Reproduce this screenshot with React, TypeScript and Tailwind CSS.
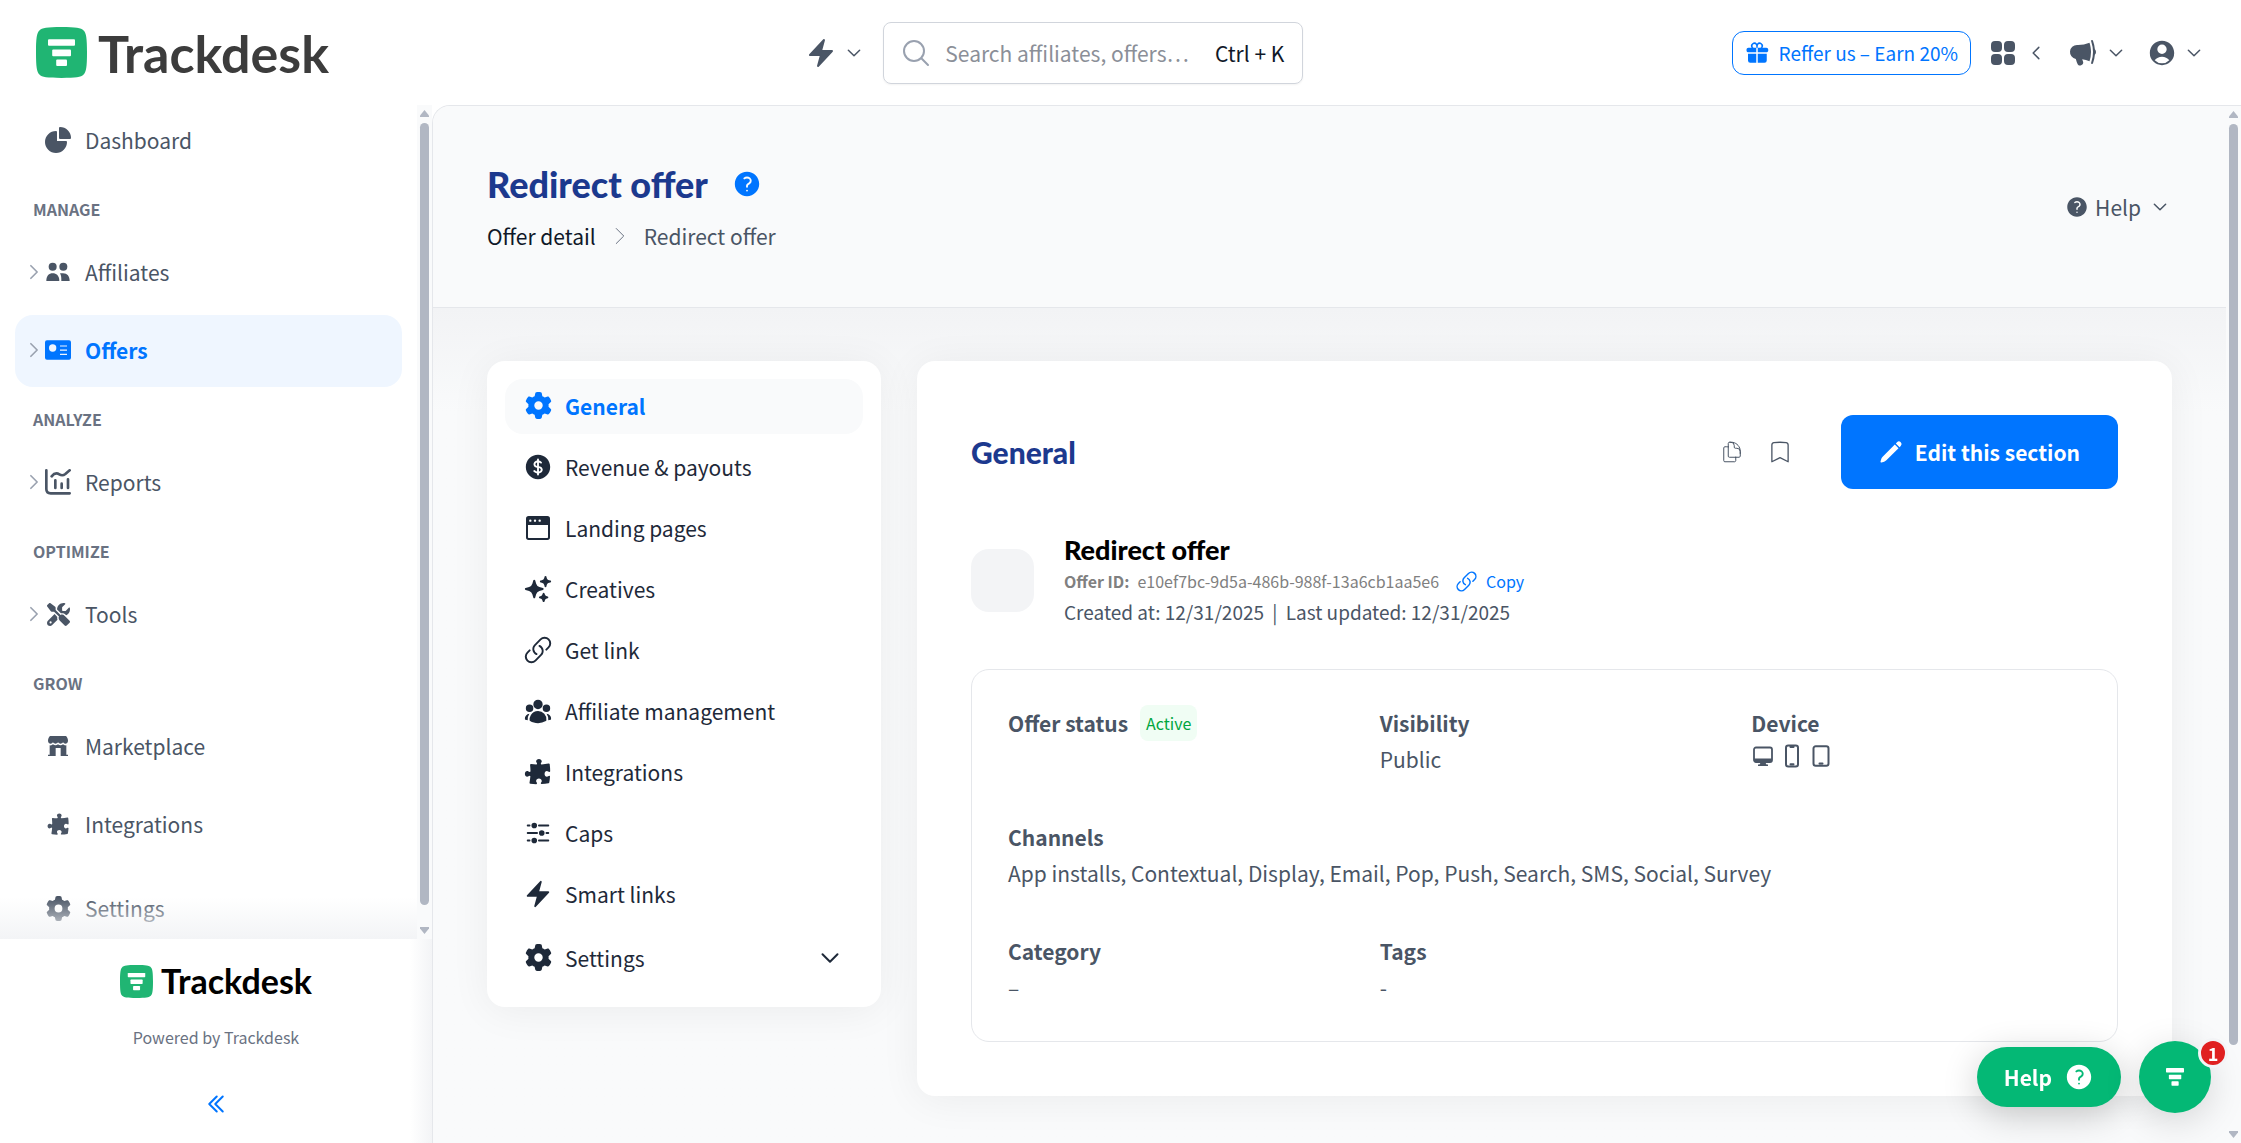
import type { ReactNode } from "react";
import { FaGear, FaScrewdriverWrench } from "react-icons/fa6";
import {
  HiAdjustmentsHorizontal,
  HiBolt,
  HiChartPie,
  HiCurrencyDollar,
  HiGift,
  HiLink,
  HiMegaphone,
  HiOutlineBookmark,
  HiOutlineChevronDoubleLeft,
  HiOutlineChevronDown,
  HiOutlineChevronLeft,
  HiOutlineChevronRight,
  HiOutlineDevicePhoneMobile,
  HiOutlineDeviceTablet,
  HiOutlineDocumentDuplicate,
  HiOutlineMagnifyingGlass,
  HiPencil,
  HiPuzzlePiece,
  HiQuestionMarkCircle,
  HiSparkles,
  HiSquares2X2,
  HiUserCircle,
  HiUserGroup,
} from "react-icons/hi2";

const LogoBars = ({ className }: { className: string }) => (
  <svg viewBox="0 0 27 27" className={className} fill="currentColor" aria-hidden="true">
    <rect x="0" y="0" width="27" height="6.6" rx="1" />
    <rect x="4.3" y="10.2" width="18.6" height="6.6" rx="1" />
    <rect x="8.2" y="20" width="10.8" height="6.6" rx="1" />
  </svg>
);

const LogoMark = ({ className }: { className: string }) => (
  <svg viewBox="0 0 51 51" className={className} aria-hidden="true">
    <path
      d="M25.5 0C40 0 45 .8 47.6 3.4S51 11 51 25.5 50.2 45 47.6 47.6 40 51 25.5 51 6 50.2 3.4 47.6 0 40 0 25.5.8 6 3.4 3.4 11 0 25.5 0Z"
      fill="#20b573"
    />
    <g fill="#fff">
      <rect x="12" y="12.2" width="27" height="6.6" rx="1" />
      <rect x="16.2" y="22.6" width="18.8" height="6.6" rx="1" />
      <rect x="20.2" y="32.4" width="10.8" height="6.6" rx="1" />
    </g>
  </svg>
);

const PeopleIcon = () => (
  <svg viewBox="0 0 78 78" className="size-[26px]" fill="currentColor" aria-hidden="true">
    <circle cx="23" cy="23" r="12" />
    <circle cx="55" cy="23" r="12" />
    <path d="M4 66C4 50 12 43 23 43S43 50 43 66Z" />
    <path d="M45 43H54C67 43 74 52 74 66H49C49 56 49 50 45 43Z" />
  </svg>
);

const OfferIcon = () => (
  <svg viewBox="0 0 78 78" className="size-[26px]" aria-hidden="true">
    <rect x="0" y="10" width="78" height="58" rx="6" fill="currentColor" />
    <circle cx="23" cy="33" r="11" fill="#eff6ff" />
    <path d="M45 27H66M45 39.5H66M45 52H66" stroke="#eff6ff" strokeWidth="3.5" />
  </svg>
);

const ReportsIcon = () => (
  <svg
    viewBox="0 0 78 78"
    className="size-[26px]"
    fill="none"
    stroke="currentColor"
    strokeWidth="8"
    strokeLinecap="round"
    strokeLinejoin="round"
    aria-hidden="true"
  >
    <path d="M4 4V60C4 69 9 73 17 73H74" />
    <path d="M20 22C28 12 35 11 43 16S56 19 61 15L74 4" />
    <path d="M31 34V57M50 44V57M69 31V57" />
  </svg>
);

const StoreIcon = () => (
  <svg viewBox="0 0 60 60" className="size-5" fill="currentColor" aria-hidden="true">
    <path d="M6 0H54C58 4 60 9 60 14C60 20 56 23 52 23C49 23 47 21 45 19C43 22 40 23 37.500 23S32 21 30 19C28 22 25 23 22.500 23S17 22 15 19C13 21 11 23 8 23C4 23 0 20 0 14C0 9 2 4 6 0Z" />
    <path d="M5 28C9 29 12 28 15 25C19 29 26 29 30 25C34 29 41 29 45 25C48 28 51 29 55 28V56H60V60H38V36H23V60H0V56H5Z" />
  </svg>
);

const WindowIcon = () => (
  <svg viewBox="0 0 72 72" className="size-6" aria-hidden="true">
    <rect x="3" y="3" width="66" height="66" rx="5" fill="none" stroke="currentColor" strokeWidth="6" />
    <path d="M3 3H69V27H3Z" fill="currentColor" />
    <g fill="#fff">
      <circle cx="13" cy="14" r="3.500" />
      <circle cx="27" cy="14" r="3.500" />
      <circle cx="41" cy="14" r="3.500" />
    </g>
  </svg>
);

const MonitorIcon = () => (
  <svg viewBox="0 0 24 24" className="size-6" aria-hidden="true">
    <rect x="3" y="3.500" width="18" height="14.500" rx="2" fill="none" stroke="currentColor" strokeWidth="1.800" />
    <path d="M3 14.500H21V16.500Q21 18 19.500 18H4.500Q3 18 3 16.500ZM10 18H14L15.500 20.500H17V22H7V20.500H8.500Z" fill="currentColor" />
  </svg>
);

type NavEntry = { label: string; icon: ReactNode; expandable?: boolean; active?: boolean };

const sections: { title: string; items: NavEntry[] }[] = [
  {
    title: "MANAGE",
    items: [
      { label: "Affiliates", icon: <PeopleIcon />, expandable: true },
      { label: "Offers", icon: <OfferIcon />, expandable: true, active: true },
    ],
  },
  { title: "ANALYZE", items: [{ label: "Reports", icon: <ReportsIcon />, expandable: true }] },
  { title: "OPTIMIZE", items: [{ label: "Tools", icon: <FaScrewdriverWrench size={23} />, expandable: true }] },
  {
    title: "GROW",
    items: [
      { label: "Marketplace", icon: <StoreIcon /> },
      { label: "Integrations", icon: <HiPuzzlePiece size={25} /> },
    ],
  },
];

const offerMenu = [
  { label: "General", icon: <FaGear size={27} />, active: true },
  { label: "Revenue & payouts", icon: <HiCurrencyDollar size={30} /> },
  { label: "Landing pages", icon: <WindowIcon /> },
  { label: "Creatives", icon: <HiSparkles size={30} /> },
  { label: "Get link", icon: <HiLink size={30} /> },
  { label: "Affiliate management", icon: <HiUserGroup size={30} /> },
  { label: "Integrations", icon: <HiPuzzlePiece size={30} /> },
  { label: "Caps", icon: <HiAdjustmentsHorizontal size={30} /> },
  { label: "Smart links", icon: <HiBolt size={30} /> },
];

function NavItem({ label, icon, expandable, active }: NavEntry) {
  return (
    <a
      href="#"
      className={`flex h-[72px] items-center rounded-[18px] pb-[2px] pl-[9px] ${
        active ? "bg-[#eff6ff] font-bold text-[#0075ff]" : "text-gray-600"
      }`}
    >
      <span className="w-[21px] shrink-0 text-gray-400">
        {expandable && <HiOutlineChevronRight size={20} strokeWidth={2} />}
      </span>
      <span className="flex w-[26px] shrink-0 justify-center">{icon}</span>
      <span className="ml-[14px]">{label}</span>
    </a>
  );
}

function Scrollbar({ thumb }: { thumb: string }) {
  return (
    <div className="flex w-[15px] shrink-0 flex-col items-center bg-[#f9fafb] py-[5px] text-[#b1b7c3]" aria-hidden="true">
      <svg viewBox="0 0 9 7" className="h-[7px] w-[9px]" fill="currentColor">
        <path d="M4.500 0 9 5.500V7H0V5.500Z" />
      </svg>
      <div className="my-1.5 w-[9px] flex-1">
        <div className={`rounded-full bg-[#b1b7c3] ${thumb}`} />
      </div>
      <svg viewBox="0 0 9 7" className="h-[7px] w-[9px]" fill="currentColor">
        <path d="M0 0H9V1.500L4.500 7 0 1.500Z" />
      </svg>
    </div>
  );
}

function Header() {
  return (
    <header className="flex h-[105px] shrink-0 items-center justify-between pr-[38px] pl-9 text-gray-600">
      <a href="#" className="flex items-center gap-[11px] font-[Lato,sans-serif] text-[52px] leading-none font-bold text-[#3c3c3c]">
        <LogoMark className="size-[51px]" />
        <span>Trackdesk</span>
      </a>
      <div className="flex items-center pl-12">
        <button type="button" aria-label="Quick actions" className="flex items-center gap-2">
          <HiBolt size={32} />
          <HiOutlineChevronDown size={18} strokeWidth={2} />
        </button>
        <label className="ml-5 flex h-[62px] w-[420px] items-center rounded-lg border border-gray-300 px-4 shadow-xs">
          <HiOutlineMagnifyingGlass size={32} strokeWidth={1.5} className="shrink-0 text-gray-400" />
          <input
            type="text"
            aria-label="Search"
            placeholder="Search affiliates, offers…"
            className="ml-[13px] min-w-0 flex-1 outline-none placeholder:text-[#8b8f98]"
          />
          <span className="mr-[2px] shrink-0 text-gray-900">Ctrl + K</span>
        </label>
      </div>
      <div className="flex items-center justify-end">
        <a href="#" className="flex h-[44px] items-center gap-2.5 rounded-xl border border-[#0075ff] px-3 text-[19px] text-[#0075ff]">
          <HiGift size={24} />
          Reffer us – Earn 20%
        </a>
        <button type="button" aria-label="Apps" className="ml-4 flex items-center gap-2">
          <HiSquares2X2 size={32} />
          <HiOutlineChevronLeft size={18} strokeWidth={2} />
        </button>
        <button type="button" aria-label="Announcements" className="ml-[22px] flex items-center gap-2">
          <HiMegaphone size={32} />
          <HiOutlineChevronDown size={18} strokeWidth={2} />
        </button>
        <button type="button" aria-label="Account" className="ml-[22px] flex items-center gap-2">
          <HiUserCircle size={30} />
          <HiOutlineChevronDown size={18} strokeWidth={2} />
        </button>
      </div>
    </header>
  );
}

function Sidebar() {
  return (
    <aside className="flex w-[432px] shrink-0 flex-col">
      <div className="flex min-h-0 flex-1">
        <nav className="relative flex-1 overflow-hidden px-[15px]">
          <NavItem label="Dashboard" icon={<HiChartPie size={32} className="shrink-0" />} />
          {sections.map((section) => (
            <div key={section.title}>
              <h2 className="px-4 pt-5 pb-4 pl-[18px] text-[16px] leading-6 font-bold text-gray-500">{section.title}</h2>
              <div className="flex flex-col gap-1.5">
                {section.items.map((item) => (
                  <NavItem key={item.label} {...item} />
                ))}
              </div>
            </div>
          ))}
          <div className="mt-3">
            <NavItem label="Settings" icon={<FaGear size={25} />} />
          </div>
          {/* Fade over the end of the scrolled list */}
          <div className="pointer-events-none absolute inset-x-0 bottom-0 h-[42px] bg-linear-to-t from-gray-100 to-transparent" />
        </nav>
        <Scrollbar thumb="h-[98%]" />
      </div>
      <div className="flex h-[204px] shrink-0 flex-col items-center bg-linear-to-l from-gray-100 to-white to-5% pt-[25px]">
        <a href="#" className="flex items-center gap-2 font-[Lato,sans-serif] text-[34px] leading-none font-bold text-black">
          <LogoMark className="size-[33px]" />
          Trackdesk
        </a>
        <p className="mt-[27px] text-[16px] leading-6 text-gray-500">Powered by Trackdesk</p>
        <button type="button" aria-label="Collapse menu" className="mt-[43px] text-[#0075ff]">
          <HiOutlineChevronDoubleLeft size={24} strokeWidth={2} />
        </button>
      </div>
    </aside>
  );
}

function PageHeader() {
  return (
    <div className="flex h-[202px] items-center justify-between border-b border-gray-200 bg-[#f9fafb] pr-[57px] pl-[54px]">
      <div>
        <div className="flex items-center gap-6">
          <h1 className="font-[Lato,sans-serif] text-[36px] leading-[48px] font-black text-[#1c398e]">Redirect offer</h1>
          <HiQuestionMarkCircle size={30} className="text-[#0075ff]" />
        </div>
        <nav className="mt-2.5 flex items-center gap-3 leading-9" aria-label="Breadcrumb">
          <a href="#" className="text-gray-900">Offer detail</a>
          <HiOutlineChevronRight size={24} strokeWidth={1} className="text-gray-500" />
          <span className="text-gray-600">Redirect offer</span>
        </nav>
      </div>
      <button type="button" className="flex items-center gap-1.5 text-gray-600">
        <HiQuestionMarkCircle size={24} />
        Help
        <HiOutlineChevronDown size={18} strokeWidth={2} className="ml-1" />
      </button>
    </div>
  );
}

function OfferMenu() {
  return (
    <nav className="flex w-[394px] shrink-0 flex-col gap-1.5 rounded-[18px] bg-white p-[18px] text-gray-800 shadow-[0_4px_40px_rgba(0,0,0,0.06)]">
      {offerMenu.map((item) => (
        <a
          key={item.label}
          href="#"
          className={`flex h-[55px] items-center gap-3 rounded-[18px] px-[18px] pb-[2px] ${
            item.active ? "bg-[#f9fafb] font-bold text-[#0075ff]" : ""
          }`}
        >
          <span className="flex w-[30px] justify-center">{item.icon}</span>
          {item.label}
        </a>
      ))}
      <button type="button" className="flex h-[61px] items-center gap-3 px-[18px] pb-[2px]">
        <span className="flex w-[30px] justify-center">
          <FaGear size={27} />
        </span>
        Settings
        <HiOutlineChevronDown size={24} strokeWidth={2} className="mr-[3px] ml-auto" />
      </button>
    </nav>
  );
}

function Field({ label, badge, children, wide }: { label: string; badge?: ReactNode; children?: ReactNode; wide?: boolean }) {
  return (
    <div className={`min-h-[72px] ${wide ? "col-span-3" : ""}`}>
      <dt className="flex items-center gap-3 font-bold">
        {label}
        {badge}
      </dt>
      <dd>{children}</dd>
    </div>
  );
}

function GeneralCard() {
  return (
    <section className="min-w-0 flex-1 rounded-[18px] bg-white p-[54px] shadow-[0_4px_40px_rgba(0,0,0,0.06)]">
      <div className="flex items-center">
        <h2 className="flex-1 font-[Lato,sans-serif] text-[30px] font-black text-[#1c398e]">General</h2>
        <button type="button" aria-label="Duplicate" className="text-gray-600">
          <HiOutlineDocumentDuplicate size={24} strokeWidth={1} />
        </button>
        <button type="button" aria-label="Bookmark" className="ml-[23px] text-gray-600">
          <HiOutlineBookmark size={26} strokeWidth={1.2} />
        </button>
        <button type="button" className="ml-12 flex h-[74px] items-center gap-3 rounded-xl bg-[#0075ff] px-[38px] font-bold text-white">
          <HiPencil size={24} />
          Edit this section
        </button>
      </div>

      <div className="mt-[43px] flex items-center gap-[30px]">
        <div className="size-[63px] rounded-[18px] bg-gray-100" />
        <div>
          <h3 className="font-[Lato,sans-serif] text-[27px] leading-9 font-black text-black">Redirect offer</h3>
          <div className="flex items-center text-[16px] leading-[27px] text-[#808080]">
            <span className="font-bold">Offer ID:</span>
            <span className="ml-2">e10ef7bc-9d5a-486b-988f-13a6cb1aa5e6</span>
            <button type="button" className="ml-4 flex items-center gap-2 text-[#0075ff]">
              <HiLink size={23} />
              Copy
            </button>
          </div>
          <p className="text-[19px] leading-[33px] text-gray-600">
            Created at: 12/31/2025 <span className="mx-1">|</span> Last updated: 12/31/2025
          </p>
        </div>
      </div>

      <dl className="mt-[41px] grid grid-cols-3 gap-[42px] rounded-[18px] border border-gray-200 px-9 pt-[35px] pb-9 leading-9 text-gray-600">
        <Field
          label="Offer status"
          badge={<span className="rounded-lg bg-green-50 px-1.5 text-[16px] font-normal text-[#00a63e]">Active</span>}
        />
        <Field label="Visibility">Public</Field>
        <Field label="Device">
          <div className="flex gap-[5px] pt-[3px]">
            <MonitorIcon />
            <HiOutlineDevicePhoneMobile size={24} strokeWidth={2} />
            <HiOutlineDeviceTablet size={24} strokeWidth={2} />
          </div>
        </Field>
        <Field label="Channels" wide>
          App installs, Contextual, Display, Email, Pop, Push, Search, SMS, Social, Survey
        </Field>
        <Field label="Category">–</Field>
        <Field label="Tags">-</Field>
      </dl>
    </section>
  );
}

export default function App() {
  return (
    <div className="flex h-screen flex-col overflow-hidden bg-white font-['Noto_Sans_CJK_SC',sans-serif] text-[21px] leading-[30px]">
      <Header />
      <div className="flex min-h-0 flex-1">
        <Sidebar />
        <main className="flex min-w-0 flex-1 overflow-hidden rounded-tl-[18px] border-t border-l border-gray-200 bg-[#f9fafb]">
          <div className="min-w-0 flex-1">
            <PageHeader />
            <div className="flex h-full items-start gap-9 bg-linear-to-b from-[#f2f3f5] to-[#f9fafb] to-10% p-[54px] pt-[53px]">
              <OfferMenu />
              <GeneralCard />
            </div>
          </div>
          <Scrollbar thumb="h-[92%]" />
        </main>
      </div>

      {/* Floating help widgets */}
      <div className="fixed right-[30px] bottom-[30px] flex items-center gap-[18px] text-white">
        <button type="button" className="flex h-[60px] items-center gap-3 rounded-full bg-[#04b875] px-[27px] font-bold shadow-[0_8px_36px_rgba(0,0,0,0.2)]">
          Help
          <HiQuestionMarkCircle size={30} />
        </button>
        <button
          type="button"
          aria-label="Open Trackdesk widget"
          className="relative flex size-[72px] items-center justify-center rounded-full bg-[#04b875] shadow-[0_8px_36px_rgba(0,0,0,0.15)]"
        >
          <LogoBars className="size-[18px]" />
          <span className="absolute -top-[3px] -right-[17px] flex size-[30px] items-center justify-center rounded-full border-3 border-gray-100 bg-[#e02020] text-[18px] leading-none font-bold">
            1
          </span>
        </button>
      </div>
    </div>
  );
}
